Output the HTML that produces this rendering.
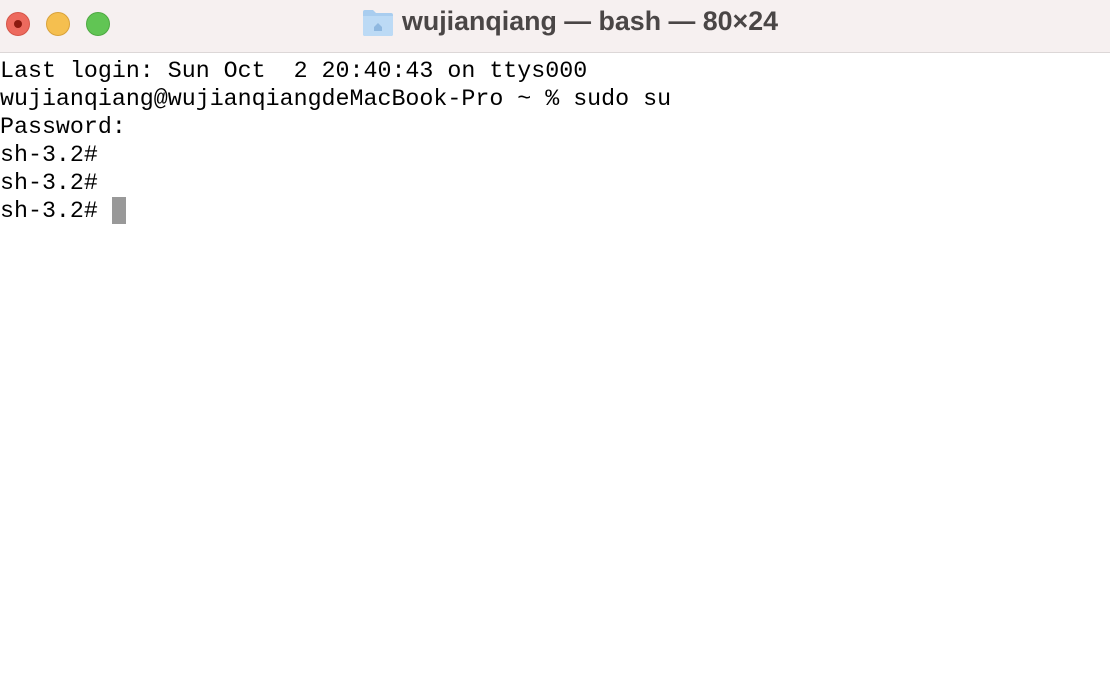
<!DOCTYPE html>
<html><head><style>
body{margin:0;width:1110px;height:680px;background:#fff;overflow:hidden;position:relative}
.bar{position:absolute;left:0;top:0;width:1110px;height:52px;background:#f6f0f0;border-bottom:1px solid #dcd7d7}
.dot{position:absolute;top:12px;width:24px;height:24px;border-radius:50%;box-sizing:border-box}
.title{position:absolute;left:402px;top:6px;font:bold 26.8px "Liberation Sans",sans-serif;color:#4a4646;white-space:nowrap}
pre{position:absolute;left:0;top:57px;margin:0;font:23.3px/28px "Liberation Mono",monospace;color:#000}
.cur{position:absolute;left:112px;top:197px;width:14px;height:27px;background:#999}
</style></head><body>
<div class="bar">
<div class="dot" style="left:6px;background:#ed6a5e;border:1px solid #d55548"><div style="position:absolute;left:7px;top:7px;width:8px;height:8px;border-radius:50%;background:#8c1a10"></div></div>
<div class="dot" style="left:46px;background:#f5bf4f;border:1px solid #d9a23a"></div>
<div class="dot" style="left:86px;background:#61c554;border:1px solid #4ea942"></div>
<svg style="position:absolute;left:362px;top:9px" width="32" height="28" viewBox="0 0 32 28"><path d="M1 3q0-2 2-2h8l3 3h15q2 0 2 2v19q0 2-2 2H3q-2 0-2-2z" fill="#a9cdef"/><path d="M1 7h30v18q0 2-2 2H3q-2 0-2-2z" fill="#bcdaf5"/><path d="M12 18l4-4 4 4v4h-8z" fill="#8fb8e0"/></svg>
<div class="title">wujianqiang — bash — 80×24</div>
</div>
<pre>Last login: Sun Oct  2 20:40:43 on ttys000
wujianqiang@wujianqiangdeMacBook-Pro ~ % sudo su
Password:
sh-3.2#
sh-3.2#
sh-3.2# </pre>
<div class="cur"></div>
</body></html>
